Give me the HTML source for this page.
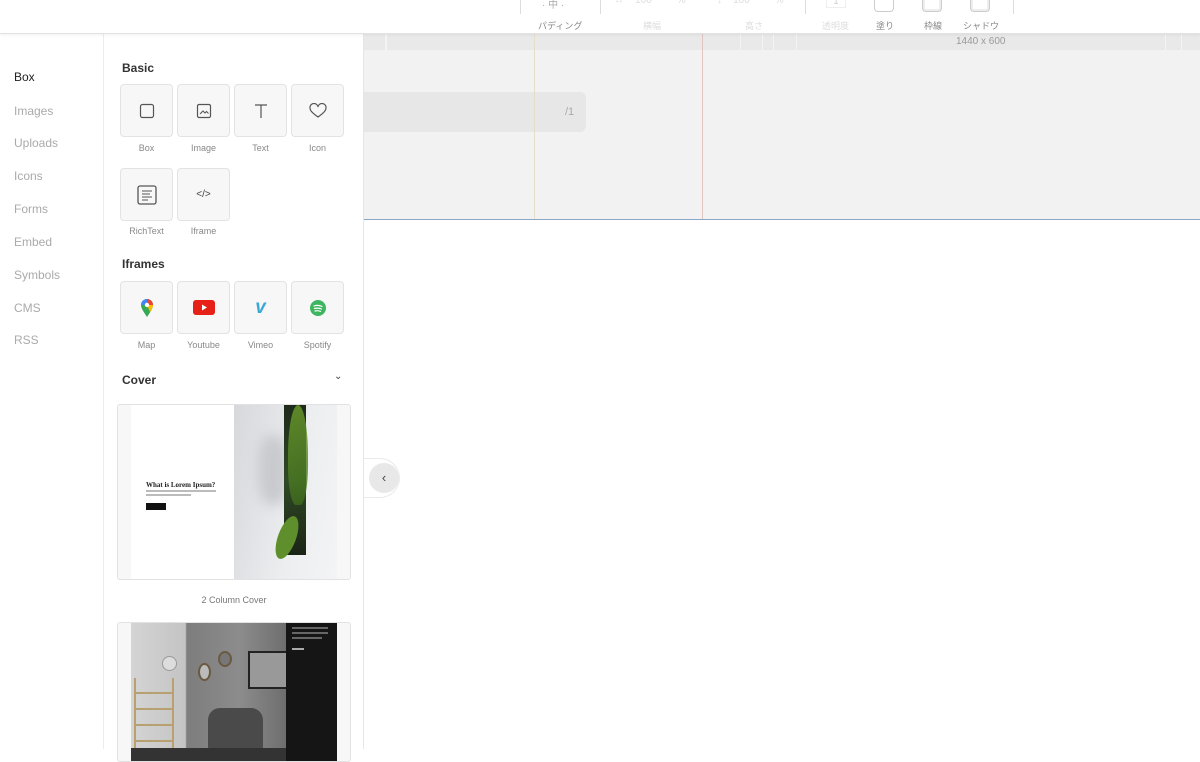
<!DOCTYPE html>
<html><head><meta charset="utf-8"><style>
*{margin:0;padding:0;box-sizing:border-box}
body{width:1200px;height:749px;overflow:hidden;background:#fff;font-family:"Liberation Sans","Noto Sans CJK JP",sans-serif;position:relative}
.a{position:absolute}
.top{left:0;top:0;width:1200px;height:34px;background:#fff;border-bottom:1px solid #e2e2e2;box-shadow:0 1px 3px rgba(0,0,0,.06);z-index:3}
.tl{font-size:9px;color:#888;top:19px}
.tlf{font-size:9px;color:#ddd;top:19px}
.nav{left:0;top:34px;width:104px;height:715px;background:#fff;border-right:1px solid #ececec}
.nav div{position:absolute;left:14px;font-size:12px;color:#aaa}
.panel{left:104px;top:34px;width:260px;height:715px;background:#fff;border-right:1px solid #e6e6e6}
.h{font-size:12px;font-weight:bold;color:#333;left:122px}
.tile{width:53px;height:53px;border:1px solid #e3e3e3;border-radius:4px;background:#f7f7f7;display:flex;align-items:center;justify-content:center}
.lb{font-size:9px;color:#888;width:53px;text-align:center}
</style></head><body>
<div class="a top">
  <div class="a" style="left:520px;top:0;width:1px;height:14px;background:#ddd"></div>
  <div class="a" style="left:600px;top:0;width:1px;height:14px;background:#ddd"></div>
  <div class="a" style="left:805px;top:0;width:1px;height:14px;background:#ddd"></div>
  <div class="a" style="left:1013px;top:0;width:1px;height:14px;background:#ddd"></div>
  <div class="a" style="left:542px;top:-4px;font-size:10px;color:#aaa">· 中 ·</div>
  <div class="a" style="left:614px;top:-5px;font-size:10px;color:#ddd">↔ &nbsp;&nbsp;&nbsp;100 &nbsp;&nbsp;&nbsp;&nbsp;&nbsp;&nbsp;&nbsp;&nbsp;%</div>
  <div class="a" style="left:717px;top:-5px;font-size:10px;color:#ddd">↕ &nbsp;&nbsp;&nbsp;100 &nbsp;&nbsp;&nbsp;&nbsp;&nbsp;&nbsp;&nbsp;&nbsp;%</div>
  <div class="a" style="left:826px;top:-4px;width:20px;height:12px;border:1px solid #eee;border-top:none;font-size:9px;color:#ccc;text-align:center">1</div>
  <div class="a" style="left:874px;top:-4px;width:20px;height:16px;border:1px solid #ccc;border-top:none;border-radius:0 0 4px 4px"></div>
  <div class="a" style="left:922px;top:-4px;width:20px;height:16px;border:1px solid #ccc;border-top:none;border-radius:0 0 4px 4px;box-shadow:inset 0 0 0 2px #eee"></div>
  <div class="a" style="left:970px;top:-4px;width:20px;height:16px;border:1px solid #ccc;border-top:none;border-radius:0 0 4px 4px;box-shadow:inset 0 0 0 2px #eee"></div>
  <div class="a tl" style="left:538px">パディング</div>
  <div class="a tlf" style="left:643px">横幅</div>
  <div class="a tlf" style="left:745px">高さ</div>
  <div class="a tlf" style="left:822px">透明度</div>
  <div class="a tl" style="left:876px">塗り</div>
  <div class="a tl" style="left:924px">枠線</div>
  <div class="a tl" style="left:963px">シャドウ</div>
</div>
<!-- canvas -->
<div class="a" style="left:364px;top:34px;width:836px;height:185px;background:#f2f2f2"></div>
<div class="a" style="left:364px;top:34px;width:836px;height:16px;background:#e9e9e9"></div>
<div class="a" style="left:385px;top:34px;width:2px;height:16px;background:#f4f4f4"></div>
<div class="a" style="left:740px;top:34px;width:1px;height:16px;background:#f4f4f4"></div>
<div class="a" style="left:762px;top:34px;width:1px;height:16px;background:#f4f4f4"></div>
<div class="a" style="left:773px;top:34px;width:1px;height:16px;background:#f4f4f4"></div>
<div class="a" style="left:796px;top:34px;width:1px;height:16px;background:#f4f4f4"></div>
<div class="a" style="left:1165px;top:34px;width:1px;height:16px;background:#f4f4f4"></div>
<div class="a" style="left:1181px;top:34px;width:1px;height:16px;background:#f4f4f4"></div>
<div class="a" style="left:956px;top:36px;font-size:10px;color:#999">1440 x 600</div>
<div class="a" style="left:364px;top:92px;width:222px;height:40px;background:#e7e7e7;border-radius:0 6px 6px 0"></div>
<div class="a" style="left:565px;top:106px;font-size:11px;color:#aaa">/1</div>
<div class="a" style="left:534px;top:34px;width:1px;height:185px;background:#e8dccb"></div>
<div class="a" style="left:702px;top:34px;width:1px;height:185px;background:#e0c4c0"></div>
<div class="a" style="left:364px;top:219px;width:836px;height:1px;background:#8aa7c8"></div>
<!-- collapse -->
<div class="a" style="left:352px;top:458px;width:48px;height:40px;border:1px solid #eaeaea;border-radius:0 20px 20px 0;background:#fff;border-left:none"></div>
<div class="a" style="left:369px;top:463px;width:30px;height:30px;border-radius:50%;background:#e8e8e8;text-align:center;line-height:29px;font-size:13px;color:#444">‹</div>
<!-- nav -->
<div class="a nav">
 <div style="top:36px;color:#222">Box</div>
 <div style="top:70px">Images</div>
 <div style="top:102px">Uploads</div>
 <div style="top:135px">Icons</div>
 <div style="top:168px">Forms</div>
 <div style="top:201px">Embed</div>
 <div style="top:234px">Symbols</div>
 <div style="top:267px">CMS</div>
 <div style="top:299px">RSS</div>
</div>
<div class="a panel"></div>
<div class="a h" style="top:61px">Basic</div>
<div class="a tile" style="left:120px;top:84px"><svg width="16" height="16"><rect x="1.5" y="1.5" width="13" height="13" rx="2" fill="none" stroke="#555" stroke-width="1.2"/></svg></div>
<div class="a tile" style="left:177px;top:84px"><svg width="16" height="16"><rect x="1.5" y="1.5" width="13" height="13" rx="1.5" fill="none" stroke="#555" stroke-width="1.2"/><path d="M4 11l3-3 2 2 1.5-1.5 2 2" fill="none" stroke="#555"/></svg></div>
<div class="a tile" style="left:234px;top:84px"><svg width="16" height="16"><path d="M2 2h12M8 2v13" stroke="#555" stroke-width="1.2"/></svg></div>
<div class="a tile" style="left:291px;top:84px"><svg width="18" height="16"><path d="M9 14C2 9 1 7 1 5a4 4 0 0 1 8-1 4 4 0 0 1 8 1c0 2-1 4-8 9z" fill="none" stroke="#555" stroke-width="1.2"/></svg></div>
<div class="a lb" style="left:120px;top:143px">Box</div>
<div class="a lb" style="left:177px;top:143px">Image</div>
<div class="a lb" style="left:234px;top:143px">Text</div>
<div class="a lb" style="left:291px;top:143px">Icon</div>
<div class="a tile" style="left:120px;top:168px"><svg width="20" height="20"><rect x="1" y="1" width="18" height="18" rx="2" fill="none" stroke="#555" stroke-width="1.3"/><path d="M5 6h10M5 9h8M5 12h10M5 15h6" stroke="#555"/></svg></div>
<div class="a tile" style="left:177px;top:168px"><span style="font-size:10px;color:#444">&lt;/&gt;</span></div>
<div class="a lb" style="left:120px;top:226px">RichText</div>
<div class="a lb" style="left:177px;top:226px">Iframe</div>
<div class="a h" style="top:257px">Iframes</div>
<div class="a tile" style="left:120px;top:281px"><svg width="14" height="20" viewBox="0 0 14 20"><path d="M7 19C3 13 1 10 1 7a6 6 0 0 1 12 0c0 3-2 6-6 12z" fill="#34a853"/><path d="M1 7a6 6 0 0 1 6-6v6z" fill="#4285f4"/><path d="M7 1a6 6 0 0 1 6 6H7z" fill="#ea4335"/><path d="M13 7c0 2-1 4-3 7L7 7z" fill="#fbbc04"/><circle cx="7" cy="7" r="2.2" fill="#fff"/></svg></div>
<div class="a tile" style="left:177px;top:281px"><svg width="22" height="15"><rect width="22" height="15" rx="3" fill="#e62117"/><path d="M9 4.5v6l5-3z" fill="#fff"/></svg></div>
<div class="a tile" style="left:234px;top:281px"><span style="font-size:19px;font-weight:bold;color:#3ba8d8;font-style:italic">v</span></div>
<div class="a tile" style="left:291px;top:281px"><svg width="16" height="16"><circle cx="8" cy="8" r="8" fill="#3fb55f"/><path d="M4 6q4-1.5 8 .5M4.5 8.5q3.5-1 7 .5M5 11q3-.8 5.5.4" stroke="#fff" stroke-width="1.2" fill="none" stroke-linecap="round"/></svg></div>
<div class="a lb" style="left:120px;top:340px">Map</div>
<div class="a lb" style="left:177px;top:340px">Youtube</div>
<div class="a lb" style="left:234px;top:340px">Vimeo</div>
<div class="a lb" style="left:291px;top:340px">Spotify</div>
<div class="a h" style="top:373px">Cover</div>
<div class="a" style="left:334px;top:371px;font-size:10px;color:#444">⌄</div>
<!-- card1 -->
<div class="a" style="left:117px;top:404px;width:234px;height:176px;border:1px solid #e2e2e2;border-radius:3px;background:#f7f7f7;overflow:hidden">
  <div class="a" style="left:13px;top:0;width:103px;height:176px;background:#fff"></div>
  <div class="a" style="left:116px;top:0;width:103px;height:176px;background:linear-gradient(100deg,#d6d8dc,#eceef0 60%,#f4f4f6)"></div>
  <div class="a" style="left:140px;top:30px;width:30px;height:70px;background:#c8cace;border-radius:40%;filter:blur(6px)"></div>
  <div class="a" style="left:166px;top:0;width:22px;height:150px;background:linear-gradient(180deg,#1d2a1a,#2f4a25 50%,#1a2416)"></div>
  <div class="a" style="left:170px;top:0;width:20px;height:100px;background:linear-gradient(160deg,#6fa02c,#3d6a1e);border-radius:50% 50% 40% 40%;opacity:.8"></div>
  <div class="a" style="left:160px;top:110px;width:18px;height:45px;background:#5f8f2c;border-radius:50%;transform:rotate(20deg)"></div>
  <div class="a" style="left:28px;top:76px;font-family:'Liberation Serif',serif;font-weight:bold;font-size:7px;color:#222">What is Lorem Ipsum?</div>
  <div class="a" style="left:28px;top:85px;width:70px;height:2px;background:#bbb"></div>
  <div class="a" style="left:28px;top:89px;width:45px;height:2px;background:#bbb"></div>
  <div class="a" style="left:28px;top:98px;width:20px;height:7px;background:#111"></div>
</div>
<div class="a" style="left:117px;top:595px;width:234px;text-align:center;font-size:9px;color:#777">2 Column Cover</div>
<!-- card2 -->
<div class="a" style="left:117px;top:622px;width:234px;height:140px;border:1px solid #e2e2e2;border-radius:3px;background:#f7f7f7;overflow:hidden">
  <div class="a" style="left:13px;top:0;width:155px;height:140px;background:linear-gradient(90deg,#d4d4d4 0,#c4c4c4 35%,#7d7d7d 36%,#8c8c8c 70%,#6e6e6e)"></div>
  <div class="a" style="left:90px;top:85px;width:55px;height:50px;background:#4a4a4a;border-radius:12px"></div>
  <div class="a" style="left:130px;top:28px;width:46px;height:38px;border:2px solid #222;background:#999"></div>
  <div class="a" style="left:44px;top:33px;width:15px;height:15px;border-radius:50%;background:#ddd;border:1px solid #999"></div>
  <div class="a" style="left:80px;top:40px;width:13px;height:18px;border-radius:50%;background:#bbb;border:2px solid #6a5a40"></div>
  <div class="a" style="left:100px;top:28px;width:14px;height:16px;border-radius:50%;background:#777;border:2px solid #6a5a40"></div>
  <div class="a" style="left:16px;top:55px;width:40px;height:70px;border-left:2px solid #b8a070;border-right:2px solid #b8a070;background:repeating-linear-gradient(180deg,transparent 0 14px,#b8a070 14px 16px)"></div>
  <div class="a" style="left:13px;top:125px;width:155px;height:15px;background:#333"></div>
  <div class="a" style="left:168px;top:0;width:51px;height:140px;background:#151515"></div>
  <div class="a" style="left:174px;top:4px;width:36px;height:2px;background:#666"></div>
  <div class="a" style="left:174px;top:9px;width:36px;height:2px;background:#666"></div>
  <div class="a" style="left:174px;top:14px;width:30px;height:2px;background:#666"></div>
  <div class="a" style="left:174px;top:25px;width:12px;height:2px;background:#aaa"></div>
</div>
</body></html>
